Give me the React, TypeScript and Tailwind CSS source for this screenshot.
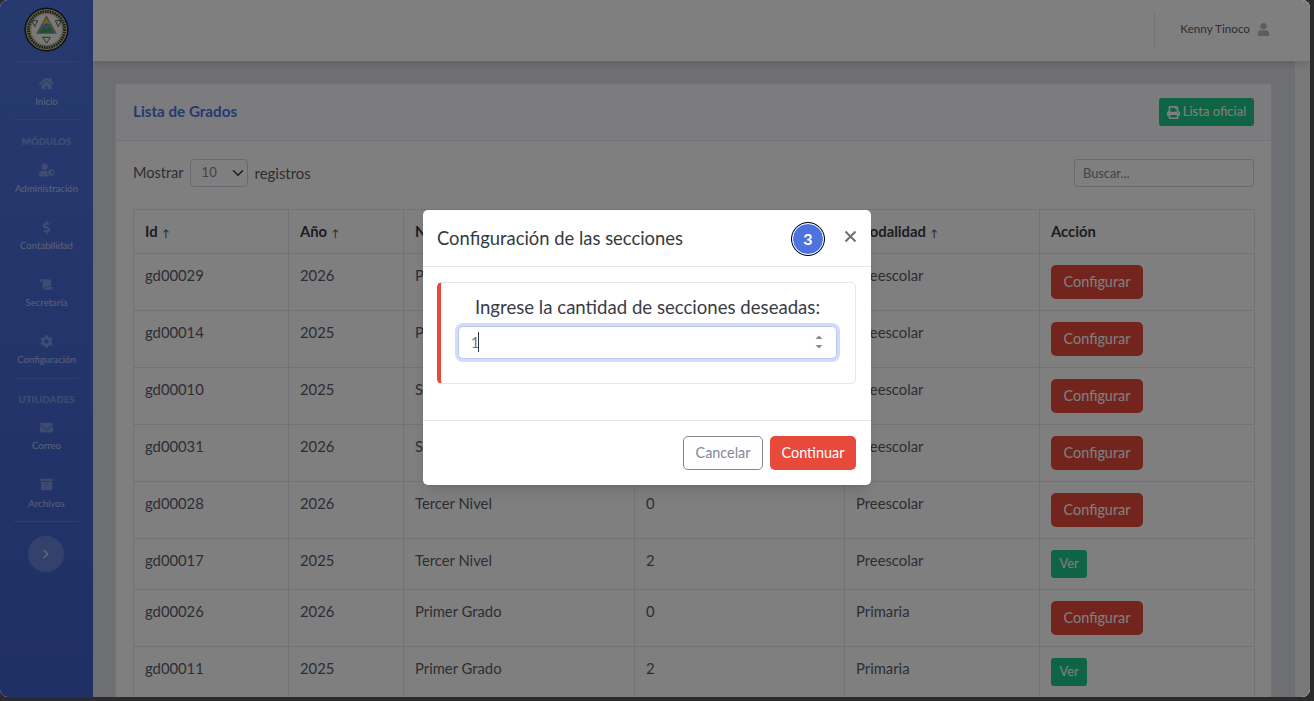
import {
  FaArchive,
  FaChevronRight,
  FaCog,
  FaDollarSign,
  FaEnvelope,
  FaHome,
  FaPrint,
  FaScroll,
  FaUser,
  FaUserShield,
} from "react-icons/fa";
import type { IconType } from "react-icons";

const rows = [
  { id: "gd00029", year: "2026", grade: "Primer Nivel", count: "0", mode: "Preescolar", done: false },
  { id: "gd00014", year: "2025", grade: "Primer Nivel", count: "0", mode: "Preescolar", done: false },
  { id: "gd00010", year: "2025", grade: "Segundo Nivel", count: "0", mode: "Preescolar", done: false },
  { id: "gd00031", year: "2026", grade: "Segundo Nivel", count: "0", mode: "Preescolar", done: false },
  { id: "gd00028", year: "2026", grade: "Tercer Nivel", count: "0", mode: "Preescolar", done: false },
  { id: "gd00017", year: "2025", grade: "Tercer Nivel", count: "2", mode: "Preescolar", done: true },
  { id: "gd00026", year: "2026", grade: "Primer Grado", count: "0", mode: "Primaria", done: false },
  { id: "gd00011", year: "2025", grade: "Primer Grado", count: "2", mode: "Primaria", done: true },
];

function NavItem({ icon: Icon, label, size = 13 }: { icon: IconType; label: string; size?: number }) {
  return (
    <div className="flex h-[38px] flex-col items-center text-white/60">
      <div className="flex h-[20px] items-center justify-center">
        <Icon size={size} className="text-white/30" />
      </div>
      <span className="mt-[2px] text-[9.6px] leading-[14px]">{label}</span>
    </div>
  );
}

function Seal() {
  return (
    <svg width="45" height="45" viewBox="0 0 46 46">
      <circle cx="23" cy="23" r="22.5" fill="#1d1d1a" />
      <circle cx="23" cy="23" r="21" fill="#c9c4a8" />
      <circle cx="23" cy="23" r="18.5" fill="none" stroke="#2a3a2a" strokeWidth="3" strokeDasharray="1.5 1" />
      <circle cx="23" cy="23" r="15.5" fill="#f2f2ea" />
      <path d="M23 9 L33 27 H13 Z" fill="#5c9ad0" stroke="#b9a23a" strokeWidth="1" />
      <path d="M16 26 L20 20 L23 23 L26 20 L30 26 Z" fill="#4c9a3a" />
      <path d="M19.5 17 L23 12 L26.5 17 Z" fill="#e8c83a" />
      <circle cx="23" cy="17.5" r="1" fill="#c0392b" />
      <path d="M8 14 L14 14 L11 20 Z M32 14 L38 14 L35 20 Z M19 31 L27 31 L23 37 Z" fill="none" stroke="#55605a" strokeWidth="1" />
    </svg>
  );
}

function Sidebar() {
  return (
    <aside className="flex w-[93px] shrink-0 flex-col items-center bg-gradient-to-b from-[#4e73df] to-[#3f60cc]">
      <div className="flex h-[61px] w-full items-center justify-center pb-[2px] pr-[1px]">
        <Seal />
      </div>
      <div className="h-px w-[65px] bg-white/15" />
      <div className="w-full pt-[11px] pb-[8px]">
        <NavItem icon={FaHome} label="Inicio" size={15} />
      </div>
      <div className="h-px w-[65px] bg-white/15" />
      <div className="pt-[15px] text-[9.6px] leading-[14px] font-extrabold text-white/30">MÓDULOS</div>
      <div className="flex w-full flex-col gap-[19px] pt-[11px] pb-[9px]">
        <NavItem icon={FaUserShield} label="Administración" size={16} />
        <NavItem icon={FaDollarSign} label="Contabilidad" />
        <NavItem icon={FaScroll} label="Secretaría" />
        <NavItem icon={FaCog} label="Configuración" />
      </div>
      <div className="h-px w-[65px] bg-white/15" />
      <div className="pt-[14px] text-[9.6px] leading-[14px] font-extrabold text-white/30">UTILIDADES</div>
      <div className="flex w-full flex-col gap-[19.5px] pt-[10px] pb-[8.5px]">
        <NavItem icon={FaEnvelope} label="Correo" />
        <NavItem icon={FaArchive} label="Archivos" />
      </div>
      <div className="h-px w-[65px] bg-white/15" />
      <div className="mt-[14px] mr-[1px] flex h-[36px] w-[36px] items-center justify-center rounded-full bg-white/20">
        <FaChevronRight size={10} className="text-white/60" />
      </div>
    </aside>
  );
}

function Topbar() {
  return (
    <header className="z-10 flex h-[61px] shrink-0 items-center justify-end bg-white pb-[3px] pr-[40px] shadow-[0_2px_8px_rgba(58,59,69,0.2)]">
      <div className="mr-[25px] h-[35px] w-px bg-[#e3e6f0]" />
      <span className="text-[11.7px] text-[#5a5c69]">Kenny Tinoco</span>
      <FaUser size={13} className="ml-[7px] text-[#b7b9cc]" />
    </header>
  );
}

function SortArrow() {
  return <span className="ml-[1px] text-[10px] font-normal text-[#3a3b45]">↑</span>;
}

function GradesCard() {
  return (
    <section className="rounded-[5px] border border-[#e3e6f0] bg-white">
      <div className="flex h-[57px] items-center justify-between border-b border-[#e3e6f0] bg-[#f8f9fc] px-[17px]">
        <h2 className="pb-[2px] text-[15.2px] font-bold text-[#4e73df]">Lista de Grados</h2>
        <button className="flex h-[28px] w-[95px] items-center justify-center gap-[3px] rounded-[3px] bg-[#1cc88a] text-[13px] text-white">
          <FaPrint size={13} />
          Lista oficial
        </button>
      </div>
      <div className="px-[17px] pt-[18px]">
        <div className="flex h-[28px] items-center justify-between text-[14.5px] text-[#5a5c69]">
          <div className="flex items-center">
            <span>Mostrar</span>
            <div className="ml-[6px] mr-[7px] flex h-[28px] w-[58px] items-center justify-between rounded-[4px] border border-[#d1d3e2] pl-[11px] pr-[3px] text-[13px] text-[#858796]">
              10
              <svg width="12" height="12" viewBox="0 0 16 16" fill="none" stroke="#343a40" strokeWidth="2" strokeLinecap="round" strokeLinejoin="round">
                <path d="M2 5l6 6 6-6" />
              </svg>
            </div>
            <span className="text-[14.9px]">registros</span>
          </div>
          <input
            placeholder="Buscar..."
            className="h-[28px] w-[180px] rounded-[3px] border border-[#d1d3e2] bg-white px-[8px] text-[12.8px] placeholder:text-[#858796]"
            tabIndex={-1}
          />
        </div>
        <table className="mt-[22px] w-[1121px] table-fixed border-collapse text-[14.8px] text-[#5a5c69]">
          <thead>
            <tr className="h-[44px] text-left text-[#3a3b45]">
              <th className="w-[155px] border border-[#e3e6f0] px-[11px] font-bold">Id <SortArrow /></th>
              <th className="w-[115px] border border-[#e3e6f0] px-[11px] font-bold">Año <SortArrow /></th>
              <th className="w-[231px] border border-[#e3e6f0] px-[11px] font-bold">Nombre <SortArrow /></th>
              <th className="w-[210px] border border-[#e3e6f0] px-[11px] font-bold">Secciones <SortArrow /></th>
              <th className="w-[195px] border border-[#e3e6f0] px-[11px] font-bold">Modalidad <SortArrow /></th>
              <th className="w-[215px] border border-[#e3e6f0] px-[11px] font-bold">Acción</th>
            </tr>
          </thead>
          <tbody>
            {rows.map((row) => (
              <tr key={row.id}>
                <td className="border border-[#e3e6f0] px-[11px] pt-[10px] pb-[12px] align-top leading-[22px]">{row.id}</td>
                <td className="border border-[#e3e6f0] px-[11px] pt-[10px] pb-[12px] align-top leading-[22px]">{row.year}</td>
                <td className="border border-[#e3e6f0] px-[11px] pt-[10px] pb-[12px] align-top leading-[22px]">{row.grade}</td>
                <td className="border border-[#e3e6f0] px-[11px] pt-[10px] pb-[12px] align-top leading-[22px]">{row.count}</td>
                <td className="border border-[#e3e6f0] px-[11px] pt-[10px] pb-[12px] align-top leading-[22px]">{row.mode}</td>
                <td className="border border-[#e3e6f0] px-[11px] py-[11px] align-top">
                  {row.done ? (
                    <button className="block h-[28px] w-[36px] rounded-[3px] bg-[#1cc88a] text-[12.8px] text-white">Ver</button>
                  ) : (
                    <button className="block h-[34px] w-[92px] rounded-[5px] bg-[#e74a3b] pb-[1px] text-[14.4px] text-white">Configurar</button>
                  )}
                </td>
              </tr>
            ))}
          </tbody>
        </table>
      </div>
    </section>
  );
}

function SectionsModal() {
  return (
    <div className="absolute inset-0 z-20 flex items-start justify-center bg-black/50 pt-[210px] pr-[16px]">
      <div className="h-[275px] w-[448px] rounded-[5px] bg-white text-[#212529] shadow-lg">
        <div className="flex h-[57px] items-center border-b border-[#e3e6f0] pl-[14px] pr-[15px]">
          <h5 className="mt-[1px] flex-1 text-[18.4px] text-[#343a40]">Configuración de las secciones</h5>
          <div className="mt-[2px] flex h-[34px] w-[34px] items-center justify-center rounded-full border border-black bg-[#4e73df] text-[16px] font-bold text-white outline-1 outline-offset-[-2px] outline-white">
            3
          </div>
          <svg width="11" height="11" viewBox="0 0 11 11" className="mb-[4px] ml-[20px]" stroke="#6c7077" strokeWidth="2">
            <path d="M0.5 0.5l10 10M10.5 0.5l-10 10" />
          </svg>
        </div>
        <div className="h-[153px] pl-[14px] pr-[15px] pt-[15px]">
          <div className="h-[102px] rounded-[5px] border border-l-4 border-[#e3e6f0] border-l-[#e74a3b] pl-[17px] pr-[18px] pt-[12px]">
            <p className="text-center text-[18.6px] leading-[24px] whitespace-nowrap text-[#3a3b45]">Ingrese la cantidad de secciones deseadas:</p>
            <div className="relative mt-[7px]">
              <input
                type="number"
                defaultValue={1}
                className="h-[33px] w-full appearance-none rounded-[5px] border border-[#bac8f3] bg-white px-[12px] text-[14.4px] text-[#6e707e] shadow-[0_0_0_3px_rgba(78,115,223,0.25)] outline-none [&::-webkit-inner-spin-button]:appearance-none"
              />
              <span className="absolute top-[6px] left-[20px] h-[20px] w-px bg-[#333]" />
              <svg width="8" height="14" viewBox="0 0 8 14" fill="#8a8a8a" className="absolute top-[9px] right-[14px]">
                <path d="M4 0.5 L7.5 4 H0.5 Z M4 13.5 L7.5 10 H0.5 Z" />
              </svg>
            </div>
          </div>
        </div>
        <div className="flex h-[65px] items-start justify-end gap-[7px] border-t border-[#e3e6f0] pr-[15px] pt-[15px]">
          <button className="h-[34px] w-[80px] rounded-[5px] border border-[#858796] text-[14.4px] text-[#858796]">Cancelar</button>
          <button className="h-[34px] w-[86px] rounded-[5px] bg-[#e74a3b] text-[14.4px] text-white">Continuar</button>
        </div>
      </div>
    </div>
  );
}

export default function App() {
  return (
    <div className="h-[701px] w-[1314px] overflow-hidden bg-[#2b2b2b] pr-[4px] pb-[4px] font-['Lato','Open_Sans',sans-serif]">
      <div className="relative flex h-full overflow-hidden rounded-[8px] bg-[#f8f9fc]">
        <Sidebar />
        <div className="flex min-w-0 flex-1 flex-col">
          <Topbar />
          <div className="flex min-h-0 flex-1">
            <main className="min-w-0 flex-1 overflow-hidden bg-[#dddee6] pl-[22px] pr-[23px] pt-[22px]">
              <GradesCard />
            </main>
            <div className="w-[15px] shrink-0 bg-[#f1f1f1]" />
          </div>
        </div>
        <SectionsModal />
      </div>
    </div>
  );
}
